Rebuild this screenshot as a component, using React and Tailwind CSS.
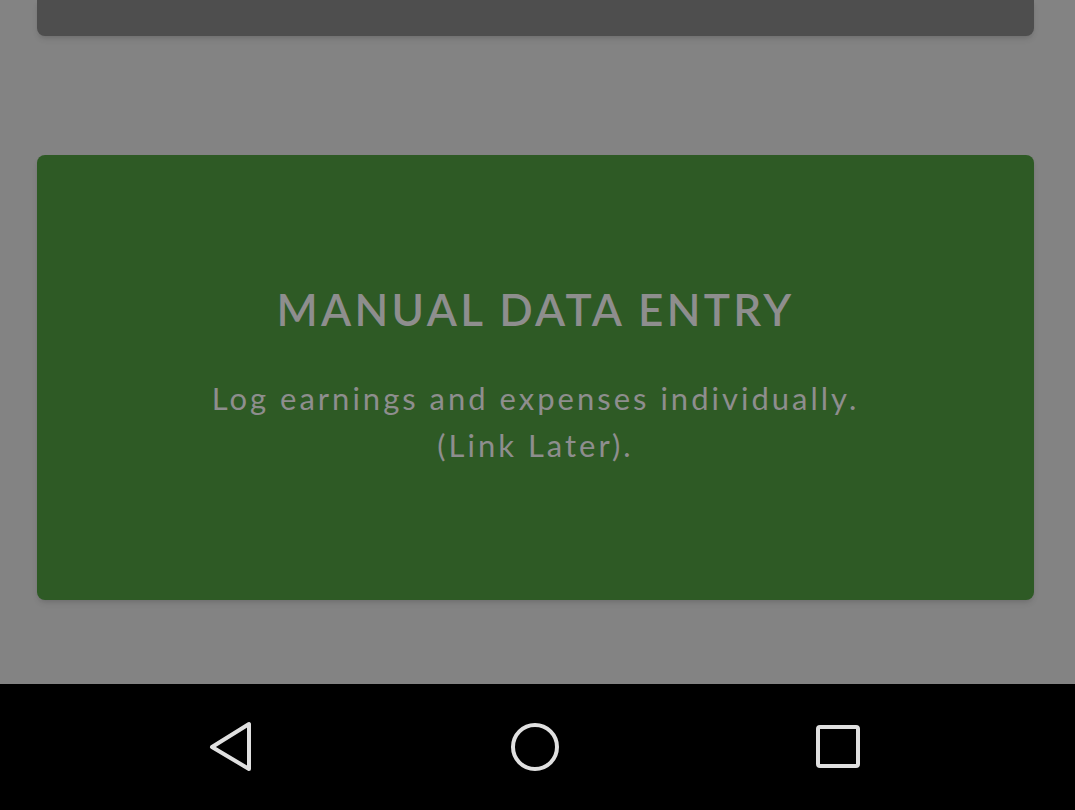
import React from "react";

function BackIcon() {
  return (
    <svg width="48" height="52" viewBox="0 0 48 52" fill="none">
      <path
        d="M41 3 L41 48 L4 26 Z"
        stroke="#e0e0e0"
        strokeWidth="4"
        strokeLinejoin="round"
      />
    </svg>
  );
}

function HomeIcon() {
  return (
    <svg width="52" height="52" viewBox="0 0 52 52" fill="none">
      <circle cx="26" cy="26" r="22" stroke="#e0e0e0" strokeWidth="4" />
    </svg>
  );
}

function RecentsIcon() {
  return (
    <svg width="48" height="48" viewBox="0 0 48 48" fill="none">
      <rect x="4" y="4" width="40" height="39" rx="2" stroke="#e0e0e0" strokeWidth="4" />
    </svg>
  );
}

export default function App() {
  return (
    <div
      className="flex flex-col w-full h-[810px] overflow-hidden bg-[#838383]"
      style={{ fontFamily: "Lato, 'Open Sans', sans-serif" }}
    >
      {/* scrolled content, dimmed */}
      <main className="flex-1 pl-[37px] pr-[41px]">
        <div className="h-[36px] rounded-b-lg bg-[#4e4e4e] shadow-md" />

        <button className="mt-[119px] w-full h-[445px] rounded-lg bg-[#2e5a25] shadow-md flex flex-col items-center text-center text-[#8e8e8e]">
          <h2 className="mt-[126px] text-[44px] leading-[56px] font-semibold tracking-[3.3px]">
            MANUAL DATA ENTRY
          </h2>
          <p className="mt-[38px] text-[31px] leading-[47px] tracking-[3px]">
            Log earnings and expenses individually.
            <br />
            (Link Later).
          </p>
        </button>
      </main>

      {/* android nav bar */}
      <nav className="h-[126px] bg-black flex items-center justify-center gap-[253px] pr-[5px]">
        <BackIcon />
        <HomeIcon />
        <RecentsIcon />
      </nav>
    </div>
  );
}
